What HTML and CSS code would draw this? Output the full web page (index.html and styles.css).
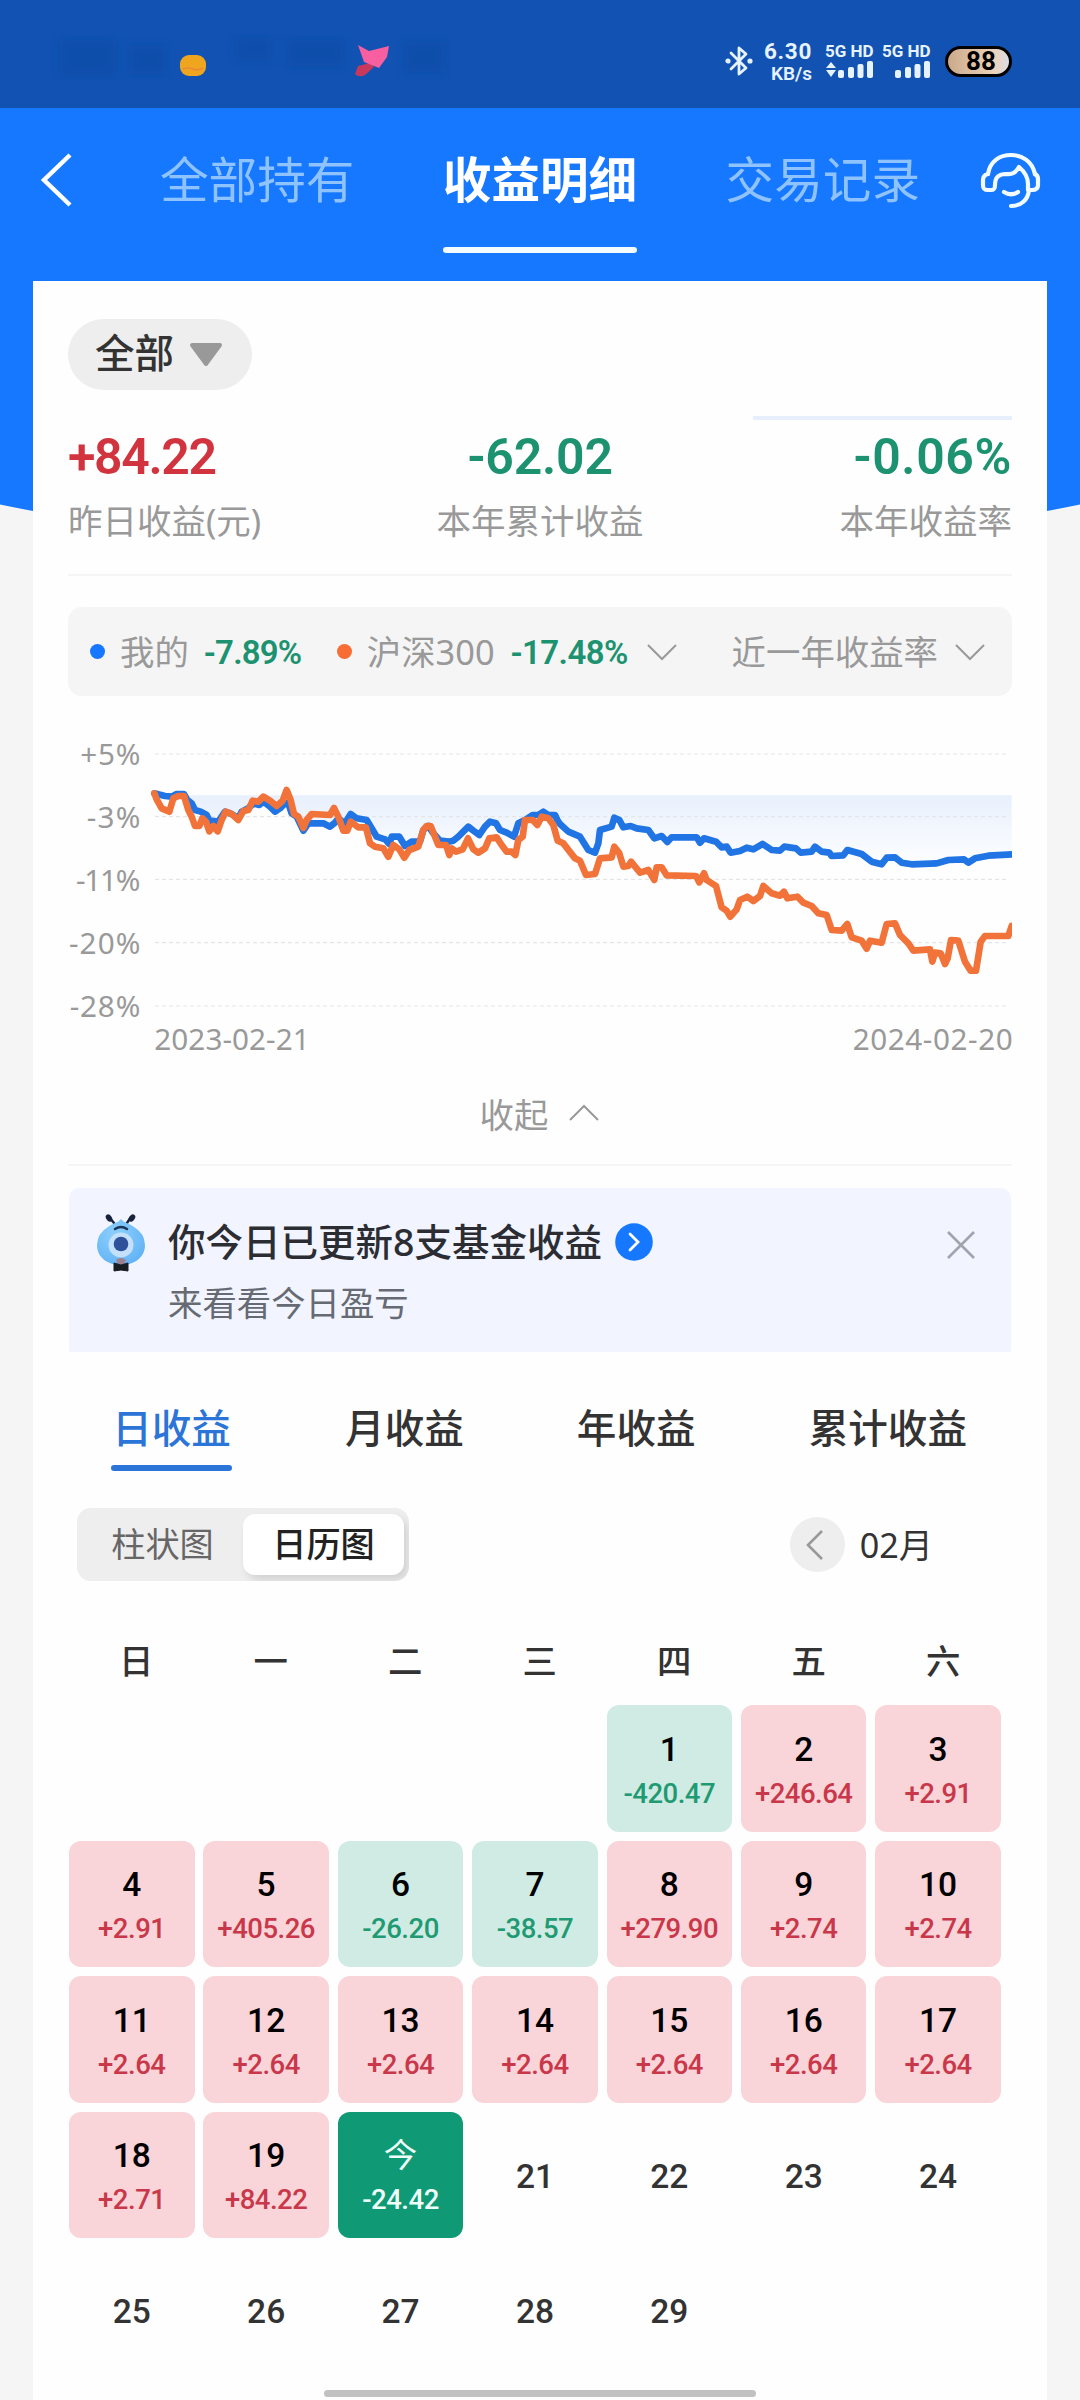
FILE: index.html
```html
<!DOCTYPE html>
<html lang="zh-CN">
<head>
<meta charset="utf-8">
<title>收益明细</title>
<link rel="stylesheet" href="styles.css">
</head>
<body>
<div class="page">
  <div class="status">
    <svg class="status-name" width="400" height="50" viewBox="50 30 400 50" aria-hidden="true">
      <defs><filter id="soft"><feGaussianBlur stdDeviation="4"/></filter></defs>
      <g filter="url(#soft)" fill="#0d4ba6" opacity=".55">
        <rect x="60" y="40" width="56" height="36"/><rect x="130" y="46" width="36" height="28"/>
        <rect x="236" y="38" width="34" height="22"/><rect x="288" y="40" width="55" height="26"/><rect x="405" y="42" width="40" height="30"/>
      </g>
      <rect x="180" y="55" width="26" height="21" rx="9" fill="#f0a51e"/>
      <path d="M183 69q5-2 10 0t10-1" stroke="#e88a3a" stroke-width="1.500" fill="none"/>
      <path d="M358 66l12-3 4 4-9 8q-6 3-10-1z" fill="#c8385c"/>
      <path d="M358 45l11 6 20-5-2 11-8 11-15-6z" fill="#f75fa0"/>
    </svg>
    <div class="status-right">
      <svg class="bt" width="28" height="32" viewBox="0 0 28 32" fill="none" stroke="#e6f3ff" stroke-width="2.800" stroke-linejoin="round" stroke-linecap="round">
        <path d="M6 8l15 15-7 6V3l7 6L6 24"/><circle cx="3" cy="16" r="1.200"/><circle cx="25" cy="16" r="1.200"/>
      </svg>
      <div class="speed"><span class="rate">6.30</span><span class="unit">KB/s</span></div>
      <div class="net"><span>5G HD</span>
        <svg width="48" height="18" viewBox="0 0 48 18" fill="#e6f3ff"><path d="M1 7l5-6 5 6zM1 9h10l-5 7z"/><rect x="13" y="9" width="6" height="8" rx="2"/><rect x="23" y="6" width="6" height="11" rx="2"/><rect x="32.500" y="3" width="6" height="14" rx="2"/><rect x="42" y="0" width="6" height="17" rx="2"/></svg>
      </div>
      <div class="net"><span>5G HD</span>
        <svg width="48" height="18" viewBox="0 0 48 18" fill="#e6f3ff"><rect x="13" y="9" width="6" height="8" rx="2"/><rect x="23" y="6" width="6" height="11" rx="2"/><rect x="32.500" y="3" width="6" height="14" rx="2"/><rect x="42" y="0" width="6" height="17" rx="2"/></svg>
      </div>
      <div class="battery">88</div>
    </div>
  </div>

  <header class="nav">
    <svg class="back" width="36" height="60" viewBox="0 0 36 60" fill="none" stroke="#fff" stroke-width="4.500"><path d="M31 5L5 30l26 25"/></svg>
    <nav class="nav-tabs">
      <span class="nav-tab">全部持有</span>
      <span class="nav-tab active">收益明细</span>
      <span class="nav-tab">交易记录</span>
    </nav>
    <svg class="service" width="64" height="62" viewBox="0 0 64 62" fill="none" stroke="#f2fbff" stroke-width="4.200" stroke-linecap="round" stroke-linejoin="round">
      <path d="M9 25C11 12 21 6 32 6s21 6 24 19"/>
      <path d="M9 25c-4 1-5 3-5 6v5c0 4 1 5 5 5h3c3 0 4-1 4-5 0-8 4-11 11-11 7 1 10-2 13-7 6 5 9 10 9 17v6h4c4 0 6-2 6-5v-6c0-3-1-4-3-5"/>
      <path d="M50 41c-1 10-8 16-18 16"/><path d="M25 43q7 4.500 14 0"/>
    </svg>
  </header>

  <main class="card">
    <div class="filter"><span>全部</span>
      <svg width="36" height="26" viewBox="0 0 36 26"><path d="M4 3h28L18 22z" fill="#999" stroke="#999" stroke-width="4" stroke-linejoin="round"/></svg>
    </div>
    <div class="load-line"></div>

    <section class="stats">
      <div class="stat"><b class="up">+84.22</b><span>昨日收益(元)</span></div>
      <div class="stat center"><b class="down">-62.02</b><span>本年累计收益</span></div>
      <div class="stat right"><b class="down">-0.06%</b><span>本年收益率</span></div>
    </section>

    <section class="legend">
      <i class="dot mine"></i><span class="name">我的</span><b class="mine-rate">-7.89%</b>
      <i class="dot index"></i><span class="name">沪深300</span><b class="index-rate">-17.48%</b>
      <svg class="chev" width="30" height="18" viewBox="0 0 30 18"><path d="M1 2l14 14L29 2"/></svg>
      <span class="period">近一年收益率</span>
      <svg class="chev" width="30" height="18" viewBox="0 0 30 18"><path d="M1 2l14 14L29 2"/></svg>
    </section>

    <svg class="chart" width="944" height="340" viewBox="84 390 2832 1020">
      <defs>
        <linearGradient id="area" gradientUnits="userSpaceOnUse" x1="0" y1="616" x2="0" y2="815"><stop offset="0" stop-color="#e8f0fd"/><stop offset="1" stop-color="#fcfdff"/></linearGradient>
        <clipPath id="plot"><rect x="330" y="400" width="2586" height="860"/></clipPath>
      </defs>
      <path fill="url(#area)" d="M343 616H2915V793L2845 797 2805 805 2785 818 2772 808 2725 810 2690 820 2615 823 2585 818 2565 802 2540 803 2525 823 2495 815 2465 792 2422 780 2410 796 2375 798 2345 785 2325 770 2315 785 2282 788 2268 775 2233 770 2195 780 2168 762 2140 778 2072 788 2045 772 2028 755 1992 745 1980 758 1970 742 1895 742 1882 756 1843 745 1825 720 1750 712 1738 690 1723 683 1715 710 1680 720 1665 788 1645 780 1620 740 1585 725 1545 675 1510 665 1478 675 1435 700 1422 740 1380 720 1350 695 1318 735 1285 710 1240 752 1200 752 1165 708 1140 755 1095 768 1078 740 1055 740 1048 762 1010 740 980 690 932 672 915 700 895 685 870 710 805 700 790 722 755 670 735 640 705 665 670 635 605 665 595 685 555 665 535 695 508 692 500 675 465 660 442 630Z"/>
      <g class="grid"><path d="M345 492H2902M345 680H2902M345 868H2902M345 1058H2902M345 1248H2902"/></g>
      <g class="axis" text-anchor="end">
        <text x="301" y="525" textLength="180">+5%</text><text x="301" y="714" textLength="161">-3%</text><text x="301" y="904" textLength="193">-11%</text><text x="301" y="1093" textLength="214">-20%</text><text x="301" y="1281" textLength="212">-28%</text>
      </g>
      <g class="axis"><text x="343" y="1380" textLength="466">2023-02-21</text><text x="2438" y="1380" textLength="480">2024-02-20</text></g>
      <g clip-path="url(#plot)">
        <polyline class="line blue" points="343,610 360,614 375,618 395,620 410,612 432,612 442,630 455,640 465,660 482,665 500,675 508,692 535,695 545,680 555,665 575,672 595,685 605,665 625,655 640,640 658,645 670,635 690,650 705,665 720,655 735,640 745,640 755,670 770,680 790,722 805,700 850,700 870,710 885,698 895,685 915,700 932,672 950,685 980,690 995,715 1010,740 1035,748 1048,762 1055,740 1078,740 1095,768 1115,755 1140,755 1150,720 1165,708 1180,730 1200,752 1225,755 1240,752 1255,740 1270,725 1285,710 1300,722 1318,735 1335,710 1350,695 1368,700 1380,720 1400,728 1422,740 1435,700 1455,690 1478,675 1495,675 1510,665 1525,675 1545,675 1552,690 1560,702 1585,725 1620,740 1645,780 1665,788 1675,760 1680,720 1715,710 1723,683 1738,690 1750,712 1772,708 1790,715 1825,720 1843,745 1865,738 1882,756 1895,742 1970,742 1980,758 1992,745 2028,755 2045,772 2060,770 2072,788 2100,783 2120,773 2140,778 2168,762 2195,780 2220,782 2233,770 2268,775 2282,788 2315,785 2325,770 2345,785 2368,788 2375,798 2410,796 2422,780 2465,792 2495,815 2525,823 2540,803 2565,802 2585,818 2615,823 2690,820 2725,810 2772,808 2785,818 2805,805 2845,797 2920,793"/>
        <polyline class="line orange" points="343,610 350,628 365,655 388,665 400,625 415,618 432,618 445,660 455,680 465,708 478,708 487,685 498,695 508,724 520,708 533,724 545,690 557,665 575,672 595,690 610,663 625,660 638,632 655,635 670,620 690,632 710,648 728,632 740,600 752,630 762,672 775,680 790,714 800,690 815,672 870,675 882,654 895,680 910,722 922,722 932,695 955,712 978,712 990,760 1005,770 1030,775 1045,800 1060,765 1078,778 1093,803 1108,780 1135,770 1150,720 1160,708 1172,708 1185,740 1195,765 1218,765 1228,795 1235,775 1248,785 1268,778 1284,745 1300,778 1315,788 1335,775 1348,745 1370,742 1385,765 1400,785 1415,785 1426,795 1435,750 1448,740 1455,690 1478,690 1492,705 1505,680 1525,685 1540,705 1553,752 1570,760 1605,805 1620,812 1638,855 1665,852 1680,805 1715,802 1723,770 1738,790 1750,830 1765,828 1773,815 1800,848 1825,840 1843,870 1850,832 1865,832 1880,856 1968,858 1978,877 1992,850 2000,870 2028,888 2045,952 2060,962 2071,980 2090,958 2100,930 2122,920 2140,933 2160,918 2170,888 2195,910 2220,917 2232,905 2242,925 2272,920 2290,938 2315,948 2335,970 2360,975 2375,1020 2405,1022 2422,1002 2435,1042 2465,1052 2480,1076 2490,1052 2525,1058 2540,1002 2565,1000 2580,1035 2605,1060 2620,1082 2670,1078 2677,1115 2685,1088 2702,1090 2715,1122 2723,1105 2733,1050 2755,1052 2775,1115 2792,1142 2808,1142 2822,1055 2835,1038 2905,1038 2915,1008"/>
      </g>
    </svg>

    <div class="collapse"><span>收起</span><svg class="chev" width="30" height="18" viewBox="0 0 30 18"><path d="M1 16L15 2l14 14"/></svg></div>

    <section class="banner">
      <svg class="mascot" width="50" height="60" viewBox="0 0 50 60">
        <defs><radialGradient id="body" cx=".4" cy=".35" r=".7"><stop offset="0" stop-color="#8ed0fc"/><stop offset="1" stop-color="#62b3f5"/></radialGradient></defs>
        <path d="M18 9L13 3M31 9l4-6" stroke="#17233d" stroke-width="2.500" stroke-linecap="round"/>
        <ellipse cx="13" cy="4" rx="2.800" ry="4" transform="rotate(-35 13 4)" fill="#17233d"/><ellipse cx="36" cy="4" rx="2.800" ry="4" transform="rotate(35 36 4)" fill="#17233d"/>
        <path d="M25 5c3 4 8 4 13 8a24 22 0 0 1 11 18c0 12-10 20-24 20S1 43 1 31a24 22 0 0 1 11-18c5-4 10-4 13-8z" fill="url(#body)"/>
        <path d="M19 15q6-4 12 0" stroke="#1c3557" stroke-width="2.500" fill="none" stroke-linecap="round"/>
        <circle cx="25" cy="31" r="12.500" fill="#c4e0fb"/><circle cx="25" cy="30" r="7.300" fill="#2e519a"/>
        <path d="M20 46q5-4 10 0l-2 4h-6z" fill="#9f8090"/>
        <path d="M18 49l7 2 7-2v8l-7-1-7 1z" fill="#1b1d24" stroke="#1b1d24" stroke-linejoin="round"/>
      </svg>
      <div class="banner-text">
        <div class="banner-title"><span>你今日已更新8支基金收益</span>
          <svg width="38" height="38" viewBox="0 0 38 38"><circle cx="19" cy="19" r="18.800" fill="#1677ff"/><path d="M15 11l8 8-8 8" fill="none" stroke="#fff" stroke-width="2.800" stroke-linecap="round"/></svg>
        </div>
        <div class="banner-sub">来看看今日盈亏</div>
      </div>
      <svg class="close" width="30" height="30" viewBox="0 0 30 30"><path d="M2 2l26 26M28 2L2 28" stroke="#a2a4ab" stroke-width="2.600"/></svg>
    </section>

    <nav class="tabs">
      <span class="tab active">日收益</span><span class="tab">月收益</span><span class="tab">年收益</span><span class="tab">累计收益</span>
    </nav>

    <div class="tools">
      <div class="segment"><span>柱状图</span><span class="on">日历图</span></div>
      <div class="month"><span class="prev"><svg width="18" height="32" viewBox="0 0 18 32"><path d="M16 2L2 16l14 14" fill="none" stroke="#999" stroke-width="2.600"/></svg></span><span>02月</span></div>
    </div>

    <div class="week"><span>日</span><span>一</span><span>二</span><span>三</span><span>四</span><span>五</span><span>六</span></div>

    <div class="calendar">
      <div class="day loss first"><b>1</b><span>-420.47</span></div>
      <div class="day gain"><b>2</b><span>+246.64</span></div>
      <div class="day gain"><b>3</b><span>+2.91</span></div>
      <div class="day gain"><b>4</b><span>+2.91</span></div>
      <div class="day gain"><b>5</b><span>+405.26</span></div>
      <div class="day loss"><b>6</b><span>-26.20</span></div>
      <div class="day loss"><b>7</b><span>-38.57</span></div>
      <div class="day gain"><b>8</b><span>+279.90</span></div>
      <div class="day gain"><b>9</b><span>+2.74</span></div>
      <div class="day gain"><b>10</b><span>+2.74</span></div>
      <div class="day gain"><b>11</b><span>+2.64</span></div>
      <div class="day gain"><b>12</b><span>+2.64</span></div>
      <div class="day gain"><b>13</b><span>+2.64</span></div>
      <div class="day gain"><b>14</b><span>+2.64</span></div>
      <div class="day gain"><b>15</b><span>+2.64</span></div>
      <div class="day gain"><b>16</b><span>+2.64</span></div>
      <div class="day gain"><b>17</b><span>+2.64</span></div>
      <div class="day gain"><b>18</b><span>+2.71</span></div>
      <div class="day gain"><b>19</b><span>+84.22</span></div>
      <div class="day today"><b>今</b><span>-24.42</span></div>
      <div class="day"><b>21</b></div>
      <div class="day"><b>22</b></div>
      <div class="day"><b>23</b></div>
      <div class="day"><b>24</b></div>
      <div class="day"><b>25</b></div>
      <div class="day"><b>26</b></div>
      <div class="day"><b>27</b></div>
      <div class="day"><b>28</b></div>
      <div class="day"><b>29</b></div>
    </div>
  </main>
  <div class="home-bar"></div>
</div>
</body>
</html>
```

FILE: styles.css
```css
* { box-sizing: border-box; }
body { margin: 0; font-family: "Noto Sans", "Noto Sans CJK SC", sans-serif; color: #333; }
svg { display: block; flex: none; }
b, .battery, .status-right { font-family: Roboto, "Noto Sans CJK SC", sans-serif; font-weight: 500; }

.page {
  position: relative; width: 1080px; height: 2400px; overflow: hidden;
  background: radial-gradient(1156px 449px at 540px 108px, #1677ff 99.8%, #f5f5f5 100%);
}

/* status bar */
.status { height: 108px; background: #1152b2; display: flex; justify-content: space-between; padding: 30px 68px 0 50px; }
.status-right { display: flex; color: #e6f3ff; padding-top: 9px; }
.bt { margin: 6px 12px 0 0; }
.speed { width: 47px; display: flex; flex-direction: column; align-items: flex-end; font-weight: 700; white-space: nowrap; }
.rate { font-size: 22.5px; line-height: 24px; letter-spacing: .7px; }
.unit { font-size: 19px; line-height: 21px; font-weight: 600; }
.net { width: 48px; margin: 4px 0 0 13px; display: flex; flex-direction: column; font-size: 17px; font-weight: 700; line-height: 16px; white-space: nowrap; }
.net + .net { margin-left: 9px; }
.net svg { margin-top: 2px; }
.battery { width: 67px; height: 31px; margin: 7px 0 0 15px; border: 3px solid #000; border-radius: 16px; background: linear-gradient(90deg, #cbaa8b, #edd3b7 75%, #dcdce8); color: #000; font-weight: 700; font-size: 26px; line-height: 24px; text-align: center; padding-left: 5px; }

/* navigation */
.nav { height: 173px; background: #1677ff; display: flex; align-items: flex-start; padding: 41px 37px 0 39px; }
.back { margin-top: 1px; }
.nav-tabs { width: 760px; margin: -7px 0 0 85px; display: flex; justify-content: space-between; }
.nav-tab { display: flex; flex-direction: column; justify-content: space-between; font-size: 48.6px; line-height: 75px; height: 111px; color: #8fc3ff; white-space: nowrap; }
.nav-tab.active { color: #fff; font-weight: 700; }
.nav-tab.active::after { content: ""; height: 6px; border-radius: 3px; background: #f4fcff; }
.service { margin: 0 0 0 auto; }

/* card */
.card { margin: 0 33px; height: 2119px; padding: 38px 35px 0; background: #fefefe; }
.filter { width: 184px; height: 71px; border-radius: 36px; background: #eee; display: flex; align-items: center; gap: 14px; padding-left: 27px; font-size: 39.5px; line-height: 71px; font-weight: 500; }
.filter span { margin-top: -2px; }
.load-line { width: 259px; height: 4px; margin: 26px 0 0 auto; background: #e8effc; }
.stats { height: 156px; display: grid; grid-template-columns: 1fr 1fr 1fr; border-bottom: 2px solid #f5f5f5; color: #999; font-size: 34.5px; }
.stat { display: flex; flex-direction: column; }
.stat.center { align-items: center; }
.stat.right { align-items: flex-end; }
.stat b { font-size: 50px; line-height: 60px; margin-top: 7px; font-weight: 600; letter-spacing: -1.4px; }
.stat.center b { letter-spacing: -.2px; }
.stat.right b { letter-spacing: .6px; }
.stat span { line-height: 50px; margin-top: 9px; }
.up { color: #d2343f; }
.down { color: #1c9270; }

.legend { margin-top: 31px; height: 89px; border-radius: 14px; background: #f5f5f5; display: flex; align-items: center; padding-left: 22px; font-size: 34.4px; color: #999; white-space: nowrap; }
.legend span { margin-top: -3px; }
.legend b { font-size: 33px; color: #1c9270; line-height: 89px; padding-top: 2px; font-weight: 600; }
.dot { width: 15px; height: 15px; border-radius: 50%; flex: none; }
.dot.mine { background: #1677ff; }
.dot.index { background: #f76d35; }
.name { margin-left: 15px; }
.mine-rate { width: 133px; margin-left: 15px; letter-spacing: -.8px; }
.index-rate { width: 122px; margin-left: 16px; letter-spacing: -.6px; }
.chev { fill: none; stroke: #999; stroke-width: 2; margin-left: 14px; }
.legend .period { margin-left: 55px; }
.period + .chev { margin-left: 17px; }

.chart { margin-top: 24px; }
.grid { stroke: #e3e5e8; stroke-width: 3.500; stroke-dasharray: 12 9; }
.axis { font-size: 89px; fill: #999; }
.line { fill: none; stroke-width: 20; stroke-linejoin: round; stroke-linecap: round; }
.blue { stroke: #2074e4; }
.orange { stroke: #f27339; }

.collapse { height: 106px; border-bottom: 2px solid #f5f5f5; display: flex; justify-content: center; align-items: center; color: #999; font-size: 34.4px; padding: 2px 1px 0 0; }
.collapse .chev { margin-left: 21px; }

.banner { height: 164px; margin: 22px 1px 0; border-radius: 10px 10px 2px 2px; background: #f2f5ff; display: flex; padding: 24px 35px 0 27px; }
.mascot { margin-top: 2px; }
.banner-text { margin-left: 22px; flex: 1; }
.banner-title { display: flex; align-items: center; gap: 13px; font-size: 37.5px; line-height: 60px; color: #2b2d33; white-space: nowrap; font-weight: 500; }
.banner-sub { font-size: 34.4px; line-height: 62px; color: #666a72; }
.close { margin-top: 18px; }

.tabs { display: flex; margin-top: 46px; padding: 0 45px 0 43px; justify-content: space-between; font-size: 39.6px; line-height: 60px; color: #333; font-weight: 500; }
.tab { height: 73px; white-space: nowrap; display: flex; flex-direction: column; justify-content: space-between; }
.tab.active { color: #2b74d8; width: 121px; align-items: center; }
.tab.active::after { content: ""; width: 121px; height: 6px; border-radius: 3px; background: #2b74d8; }

.tools { display: flex; justify-content: space-between; align-items: center; margin-top: 37px; padding: 0 79px 0 9px; height: 73px; font-size: 34.2px; }
.segment { width: 332px; height: 73px; border-radius: 14px; background: #eee; display: flex; align-items: center; padding: 0 5px; color: #666; overflow: hidden; }
.segment span { width: 161px; height: 61px; line-height: 59px; text-align: center; }
.segment span.on { background: #fff; color: #222; border-radius: 12px; box-shadow: 4px 5px 8px rgba(0,0,0,.12); font-weight: 500; }
.month { display: flex; align-items: center; gap: 15px; line-height: 60px; }
.prev { width: 55px; height: 55px; border-radius: 50%; background: #eee; display: flex; align-items: center; padding-left: 16px; }

.week { display: grid; grid-template-columns: repeat(7, 134.5px); margin: 50px 0 0 1px; height: 60px; text-align: center; font-size: 34.4px; line-height: 60px; font-weight: 500; }
.calendar { display: grid; grid-template-columns: repeat(7, 125.5px); grid-auto-rows: 126.5px; gap: 9px 8.9px; margin: 14px 0 0 1px; }
.day { border-radius: 12px; display: flex; flex-direction: column; align-items: center; justify-content: center; font-family: Roboto, "Noto Sans CJK SC", sans-serif; font-size: 27.5px; font-weight: 500; line-height: 44px; letter-spacing: -.5px; padding-top: 4px; }
.day b { font-size: 33.5px; letter-spacing: 0; }
.day.first { grid-column-start: 5; }
.gain { background: #f9d4d8; color: #c9374a; }
.loss { background: #d0ebe3; color: #1f9a73; }
.gain b, .loss b { color: #000; }
.gain, .loss, .today { padding-top: 7px; }
.today { background: #0f9974; color: #effff9; }
.today b { font-weight: 400; }

.home-bar { position: absolute; left: 324px; top: 2390px; width: 432px; height: 7px; border-radius: 4px; background: #c1c1c1; }
```
